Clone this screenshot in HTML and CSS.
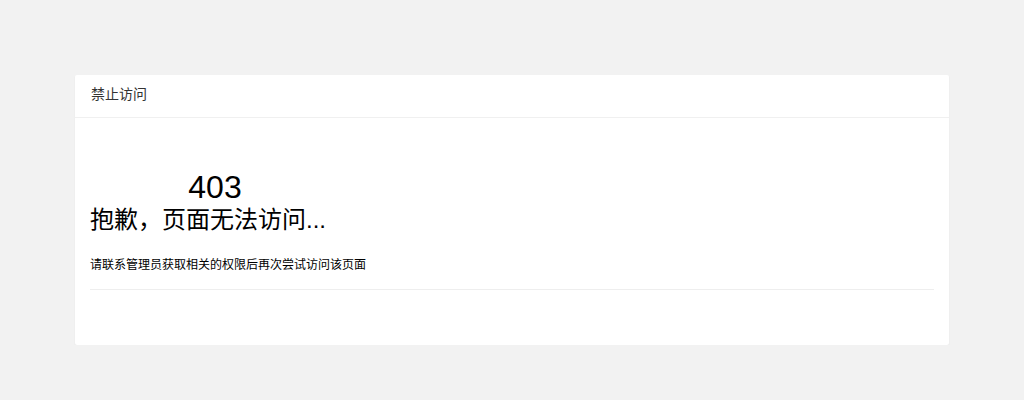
FILE: index.html
```html
<!DOCTYPE html>
<html lang="zh-CN">
<head>
    <meta charset="UTF-8">
    <meta name="viewport" content="width=device-width, initial-scale=1.0">
    <title>禁止访问</title>
    <link rel="stylesheet" href="styles.css">
</head>
<body>
    <div class="card">
        <div class="card-header">禁止访问</div>
        <div class="card-body">
            <div class="error-code">403</div>
            <h2 class="error-title">抱歉，页面无法访问...</h2>
            <p class="error-desc">请联系管理员获取相关的权限后再次尝试访问该页面</p>
            <hr class="divider">
        </div>
    </div>
</body>
</html>
```

FILE: styles.css
```css
body {
    font-family: "Liberation Sans", "Noto Sans CJK SC", sans-serif;
    margin: 0;
    padding: 75px 75px 0;
    background-color: #f2f2f2;
    color: #000;
}

.card {
    background-color: #fff;
    border-radius: 2px;
    box-shadow: 0 1px 2px rgba(0, 0, 0, 0.06);
    height: 270px;
}

.card-header {
    height: 42px;
    line-height: 38px;
    padding: 0 16px;
    font-size: 14px;
    color: #333;
    border-bottom: 1px solid #f0f0f0;
}

.card-body {
    padding: 53px 15px 0;
}

.error-code {
    width: 250px;
    text-align: center;
    font-size: 32px;
    line-height: 32px;
}

.error-title {
    margin: 5px 0 0;
    font-size: 24px;
    font-weight: normal;
    line-height: 24px;
}

.error-desc {
    margin: 23px 0 0;
    font-size: 12px;
    line-height: 20px;
}

.divider {
    margin: 14px 0 0;
    border: none;
    border-top: 1px solid #eee;
}
```
